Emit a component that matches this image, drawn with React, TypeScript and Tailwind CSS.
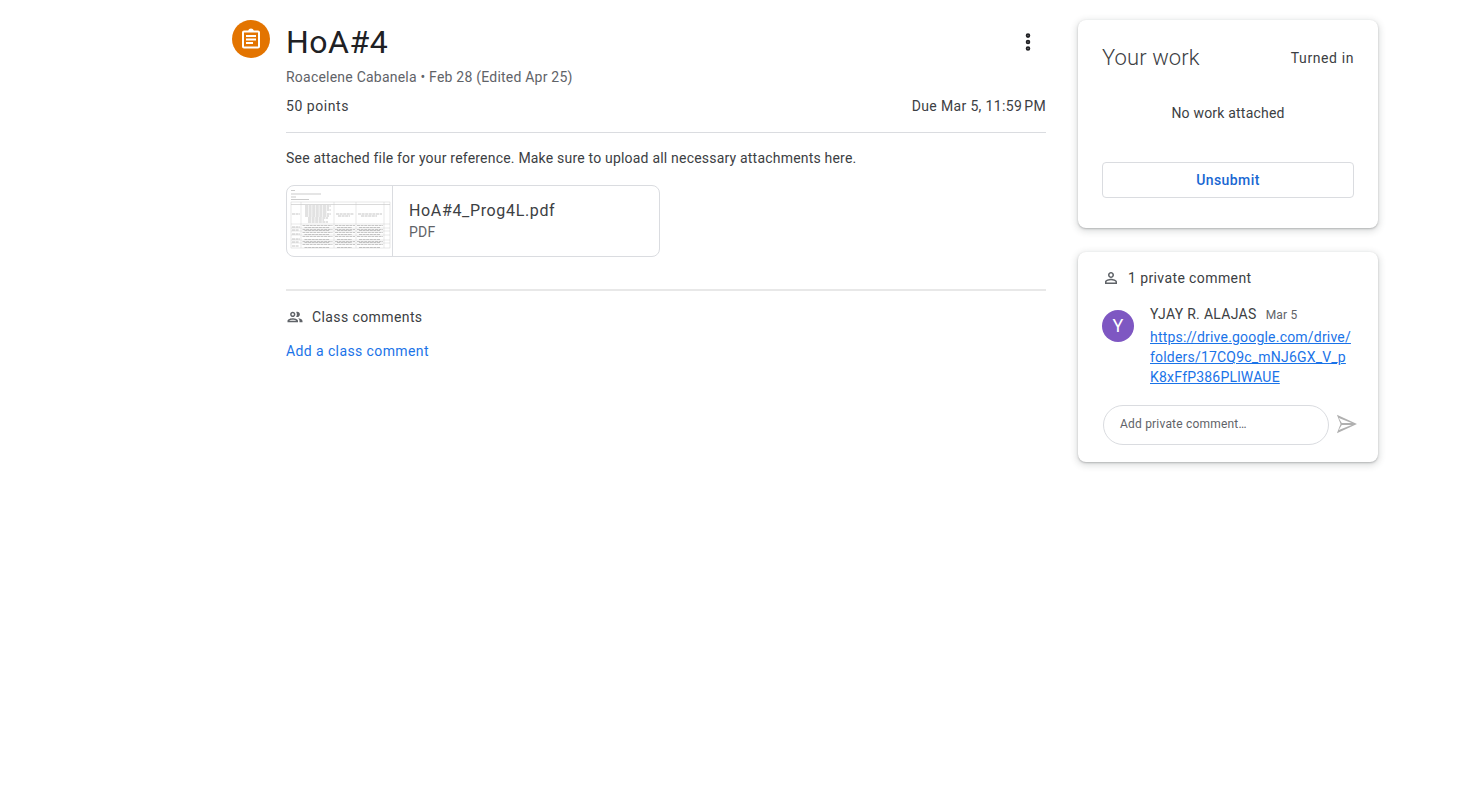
import { MoreVertical } from 'lucide-react'

const font = "font-['Roboto','Liberation_Sans',sans-serif]"

// row bands of the pdf preview: [top, bottom]
const thumbRows = [
  [19.5, 39],
  [39, 43],
  [43, 46],
  [46, 50],
  [50, 55],
  [55, 58],
  [58, 63],
]

function PdfThumb() {
  const columns = [
    [15.5, 45.5],
    [48, 68],
    [70, 96],
  ]
  return (
    <svg width="105" height="70" viewBox="0 0 105 70" className="block">
      <g stroke="#a8a8a8" strokeWidth="0.6">
        <path d="M4 4.500h4M4 8h30M4 11h5M4 13.500h18" />
      </g>
      <g stroke="#c4c4c4" strokeWidth="0.4" fill="none">
        <rect x="4" y="16" width="99" height="46" />
        <path d="M14 16v46M47 16v46M69 16v46M97 16v46M4 18.500h99" />
        {thumbRows.map(([top]) => (
          <path key={top} d={`M4 ${top - 1}h99`} />
        ))}
      </g>
      <g stroke="#a0a0a0" strokeWidth="0.6" strokeDasharray="3 0.6">
        <path d="M18 20h26M18 22h24M18 24h26M18 26h22M18 28h26M18 30h24M21 32h20M21 34h16M21 36h20" />
        <path d="M49 28h18M51 30h12M71 28h24M74 30h16" />
        {thumbRows.slice(1).map(([top, bottom]) =>
          columns.map(([a, b]) => (
            <path key={`${top}-${a}`} d={`M${a} ${top + 0.5}H${b}M${a + 2} ${bottom - 1.5}H${b - 3}`} />
          ))
        )}
        <path d="M5 28h8M5 41h8M5 44h7M5 48h8M5 53h8M5 56h7M5 60h7" />
      </g>
    </svg>
  )
}

export default function App() {
  return (
    <div className={`${font} min-h-[785px] bg-white flex pl-[232px] pt-5 text-[#3c4043] tracking-[0.2px]`}>
      {/* icon */}
      <div className="w-[38px] h-[38px] rounded-full bg-[#e37400] flex items-center justify-center shrink-0">
        <svg width="24" height="24" viewBox="0 0 24 24" fill="#fff">
          <path d="M19 3.500h-4.200C14.400 2.300 13.300 1.500 12 1.500s-2.400.8-2.800 2H5c-1.100 0-2 .9-2 2v14c0 1.100.9 2 2 2h14c1.100 0 2-.9 2-2v-14c0-1.100-.9-2-2-2zm0 16H5v-14h14v14zM7 8h10v2H7V8zm0 3.500h10v2H7v-2zM7 15h7v2H7v-2z" />
        </svg>
      </div>

      {/* main column */}
      <main className="w-[760px] ml-4 shrink-0">
        <div className="flex items-start justify-between h-11">
          <h1 className="text-[32px] leading-11 text-[#202124] tracking-[0.5px]">HoA#4</h1>
          <button className="w-6 h-6 mt-2.5 mr-1.5 flex items-center justify-center text-[#202124]">
            <MoreVertical size={22} strokeWidth={3} />
          </button>
        </div>
        <div className="text-sm leading-5 text-[#5f6368] mt-[3px] tracking-[0.22px]">Roacelene Cabanela • Feb 28 (Edited Apr 25)</div>
        <div className="flex justify-between text-sm leading-5 mt-[9px] font-[450] tracking-[0.55px] text-[#3c4043]">
          <span>50 points</span>
          <span className="tracking-[0.35px]">Due Mar 5, 11:59{'\u202f'}PM</span>
        </div>
        <div className="h-px bg-[#dadce0] mt-4" />
        <p className="text-sm leading-5 mt-[15px]">See attached file for your reference. Make sure to upload all necessary attachments here.</p>

        <div className="w-[374px] h-[72px] mt-[17px] border border-[#dadce0] rounded-lg flex overflow-hidden">
          <div className="w-[106px] shrink-0 border-r border-[#dadce0]">
            <PdfThumb />
          </div>
          <div className="pl-4 pt-[15px]">
            <div className="text-base leading-5 text-[#3c4043] tracking-[0.65px]">HoA#4_Prog4L.pdf</div>
            <div className="text-sm leading-5 text-[#5f6368] mt-px">PDF</div>
          </div>
        </div>

        <div className="h-0.5 bg-[#e8e8e8] mt-8" />
        <div className="flex items-center gap-2 h-5 mt-4 text-sm font-[450] tracking-[0.4px]">
          <svg width="18" height="18" viewBox="0 0 24 24" fill="#5f6368">
            <path d="M9 13.750c-2.340 0-7 1.170-7 3.500V19h14v-1.750c0-2.330-4.660-3.500-7-3.500zM4.340 17c.84-.58 2.870-1.250 4.660-1.250s3.820.67 4.660 1.250H4.340zM9 12c1.930 0 3.500-1.570 3.500-3.500S10.930 5 9 5 5.500 6.570 5.500 8.500 7.070 12 9 12zm0-5c.83 0 1.500.67 1.500 1.500S9.830 10 9 10s-1.500-.67-1.500-1.500S8.170 7 9 7zm7.040 6.810c1.160.84 1.960 1.960 1.960 3.440V19h4v-1.750c0-2.020-3.500-3.170-5.960-3.440zM15 12c1.930 0 3.500-1.570 3.500-3.500S16.930 5 15 5c-.54 0-1.040.13-1.500.35.630.89 1 1.980 1 3.150s-.37 2.260-1 3.150c.46.220.96.350 1.500.35z" />
          </svg>
          <span>Class comments</span>
        </div>
        <div className="text-sm leading-5 font-[450] tracking-[0.4px] text-[#1a73e8] mt-[14px]">Add a class comment</div>
      </main>

      {/* right column */}
      <aside className="w-[300px] ml-8 shrink-0 flex flex-col gap-6">
        <section className="h-[208px] rounded-lg bg-white shadow-[0_1px_2px_rgba(60,64,67,0.3),0_2px_6px_2px_rgba(60,64,67,0.15)] px-6 pt-6">
          <div className="flex items-center justify-between h-7">
            <h2 className="text-[22px] leading-7 tracking-[0.1px] font-light text-[#3c4043]">Your work</h2>
            <span className="text-sm font-[450] tracking-[0.6px]">Turned in</span>
          </div>
          <div className="text-sm leading-5 text-center mt-[31px]">No work attached</div>
          <button className="w-full h-9 mt-[39px] rounded border border-[#dadce0] text-sm font-medium tracking-[0.4px] text-[#1967d2]">Unsubmit</button>
        </section>

        <section className="h-[210px] rounded-lg bg-white shadow-[0_1px_2px_rgba(60,64,67,0.3),0_2px_6px_2px_rgba(60,64,67,0.15)] pl-6 pr-5 pt-4">
          <div className="flex items-center gap-2 h-5 text-sm font-[450] tracking-[0.4px]">
            <svg width="18" height="18" viewBox="0 0 24 24" fill="#5f6368">
              <path d="M12 6c1.100 0 2 .9 2 2s-.9 2-2 2-2-.9-2-2 .9-2 2-2m0 9c2.700 0 5.800 1.290 6 2v1H6v-.99c.2-.72 3.300-2.010 6-2.010m0-11C9.790 4 8 5.790 8 8s1.790 4 4 4 4-1.790 4-4-1.790-4-4-4zm0 9c-2.670 0-8 1.340-8 4v3h16v-3c0-2.660-5.330-4-8-4z" />
            </svg>
            <span>1 private comment</span>
          </div>
          <div className="flex mt-4">
            <div className="w-8 h-8 mt-1.5 rounded-full bg-[#7e57c2] text-white text-lg flex items-center justify-center shrink-0">Y</div>
            <div className="ml-4 min-w-0">
              <div className="flex items-baseline gap-[9px] h-5 leading-5">
                <span className="text-sm font-[450] tracking-[0.3px]">YJAY R. ALAJAS</span>
                <span className="text-xs text-[#5f6368] tracking-[0.2px]">Mar 5</span>
              </div>
              <a className="block text-sm leading-5 mt-[3px] text-[#1a73e8] underline break-all w-[204px]">
                https://drive.google.com/drive/
                <br />
                folders/17CQ9c_mNJ6GX_V_p
                <br />
                K8xFfP386PLlWAUE
              </a>
            </div>
          </div>
          <div className="flex items-center mt-[18px]">
            <div className="w-[227px] h-10 ml-px rounded-[20px] border border-[#dadce0] pl-4 pb-0.5 flex items-center text-xs text-[#5f6368] tracking-[0.2px]">
              Add private comment…
            </div>
            <svg width="22" height="22" viewBox="0 0 24 24" fill="#b0b0b0" className="ml-[7px] -mt-0.5">
              <path d="M3 5.400 17.100 11H6.300L3 5.400zM6.300 13h10.800L3 18.600 6.300 13zM1 2l4 10-4 10 22-10L1 2z" />
            </svg>
          </div>
        </section>
      </aside>
    </div>
  )
}
